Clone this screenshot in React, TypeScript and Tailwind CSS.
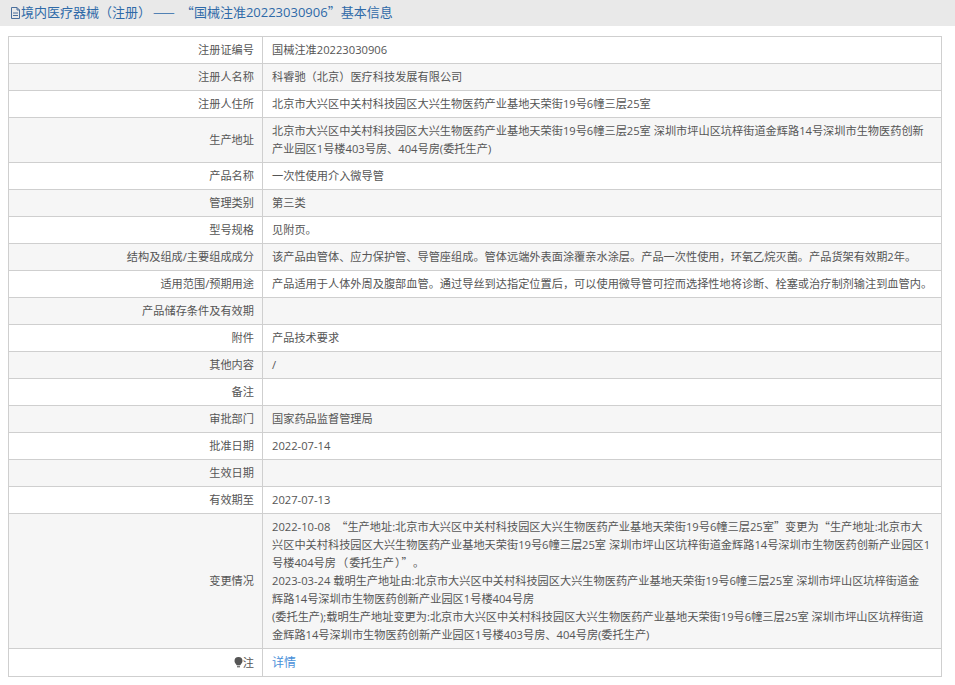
const F = '"Open Sans", "Noto Sans CJK SC", sans-serif';

type Row = { label: string; value?: React.ReactNode };

const Pt = ({ c }: { c: string }) => <span className="font-['Noto_Sans_CJK_TC'] leading-none">{c}</span>;
const Q = ({ c }: { c: string }) => <span className="font-['Noto_Sans_CJK_SC'] leading-none">{c}</span>;

const rows: Row[] = [
  { label: "注册证编号", value: "国械注准20223030906" },
  { label: "注册人名称", value: <>科睿驰<Pt c="（" />北京<Pt c="）" />医疗科技发展有限公司</> },
  { label: "注册人住所", value: "北京市大兴区中关村科技园区大兴生物医药产业基地天荣街19号6幢三层25室" },
  { label: "生产地址", value: "北京市大兴区中关村科技园区大兴生物医药产业基地天荣街19号6幢三层25室 深圳市坪山区坑梓街道金辉路14号深圳市生物医药创新产业园区1号楼403号房、404号房(委托生产)" },
  { label: "产品名称", value: "一次性使用介入微导管" },
  { label: "管理类别", value: "第三类" },
  { label: "型号规格", value: "见附页。" },
  { label: "结构及组成/主要组成成分", value: "该产品由管体、应力保护管、导管座组成。管体远端外表面涂覆亲水涂层。产品一次性使用，环氧乙烷灭菌。产品货架有效期2年。" },
  { label: "适用范围/预期用途", value: <span className="whitespace-nowrap">产品适用于人体外周及腹部血管。通过导丝到达指定位置后，可以使用微导管可控而选择性地将诊断、栓塞或治疗制剂输注到血管内。</span> },
  { label: "产品储存条件及有效期", value: "" },
  { label: "附件", value: "产品技术要求" },
  { label: "其他内容", value: "/" },
  { label: "备注", value: "" },
  { label: "审批部门", value: "国家药品监督管理局" },
  { label: "批准日期", value: "2022-07-14" },
  { label: "生效日期", value: "" },
  { label: "有效期至", value: "2027-07-13" },
  {
    label: "变更情况",
    value: (
      <>
        2022-10-08 &nbsp;<Q c="“" />生产地址:北京市大兴区中关村科技园区大兴生物医药产业基地天荣街19号6幢三层25室<Q c="”" />变更为<Q c="“" />生产地址:北京市大兴区中关村科技园区大兴生物医药产业基地天荣街19号6幢三层25室 深圳市坪山区坑梓街道金辉路14号深圳市生物医药创新产业园区1号楼404号房<span className="mx-[1px]"><Pt c="（" /></span>委托生产<span className="mx-[1px]"><Pt c="）" /></span><Q c="”" /><span className="ml-[6px]">。</span>
        <br />
        2023-03-24 载明生产地址由:北京市大兴区中关村科技园区大兴生物医药产业基地天荣街19号6幢三层25室 深圳市坪山区坑梓街道金
        <br />
        辉路14号深圳市生物医药创新产业园区1号楼404号房
        <br />
        (委托生产);载明生产地址变更为:北京市大兴区中关村科技园区大兴生物医药产业基地天荣街19号6幢三层25室 深圳市坪山区坑梓街道金辉路14号深圳市生物医药创新产业园区1号楼403号房、404号房(委托生产)
      </>
    ),
  },
];

function DocIcon() {
  return (
    <svg width="11" height="12" viewBox="0 0 11 12" fill="none" stroke="#4a6f9c" strokeWidth="1" className="shrink-0">
      <path d="M1.5 .5h5.500l2.500 2.500v8.500h-8z" />
      <path d="M7 .5v2.500h2.500M3 6h5M3 8.500h5" />
    </svg>
  );
}

function BulbIcon() {
  return (
    <svg width="9" height="11" viewBox="0 0 9 11" className="inline-block align-[-1px]" fill="#555">
      <path d="M4.500 0a4 4 0 0 1 4 4c0 1.800-1.500 2.700-2.200 4.200h-3.600C2 6.700.5 5.800.5 4a4 4 0 0 1 4-4z" />
      <rect x="3" y="8.800" width="3" height="1.600" fill="#777" />
    </svg>
  );
}

export default function App() {
  return (
    <div className="h-[685px] w-[955px] overflow-hidden bg-white" style={{ fontFamily: F }}>
      <div className="flex h-[26px] items-center bg-[#e9e9e9] pl-[10px] text-[13px] text-[#2f6aa8]">
        <DocIcon />
        <span>
          境内医疗器械<Pt c="（" />注册<Pt c="）" />
          <span className="ml-[2px] font-['Noto_Sans_CJK_SC'] leading-none">——</span>
          <span className="ml-[6px] font-['Noto_Sans_CJK_SC'] leading-none">“</span>
          国械注准20223030906<Q c="”" />基本信息
        </span>
      </div>
      <div className="px-2 pt-[10px]">
        <table className="w-[934px] table-fixed border-collapse border border-[#cfcfcf] text-[11.2px] leading-[18px] text-[#555]">
          <tbody>
            {rows.map((r, i) => (
              <tr key={r.label} className={i % 2 === 1 ? "bg-[#f6f6f6]" : "bg-white"}>
                <td className="w-[254px] border border-[#cfcfcf] px-2 py-1 text-right align-middle">{r.label}</td>
                <td className="border border-[#cfcfcf] py-1 pr-[9px] pl-[9px] align-middle">{r.value}</td>
              </tr>
            ))}
            <tr className="bg-white">
              <td className="w-[254px] border border-[#cfcfcf] px-2 py-1 text-right align-middle">
                <BulbIcon />注
              </td>
              <td className="border border-[#cfcfcf] py-1 pr-[9px] pl-[9px] align-middle text-[12px] leading-[19px] text-[#4a90d9]">详情</td>
            </tr>
          </tbody>
        </table>
      </div>
    </div>
  );
}
